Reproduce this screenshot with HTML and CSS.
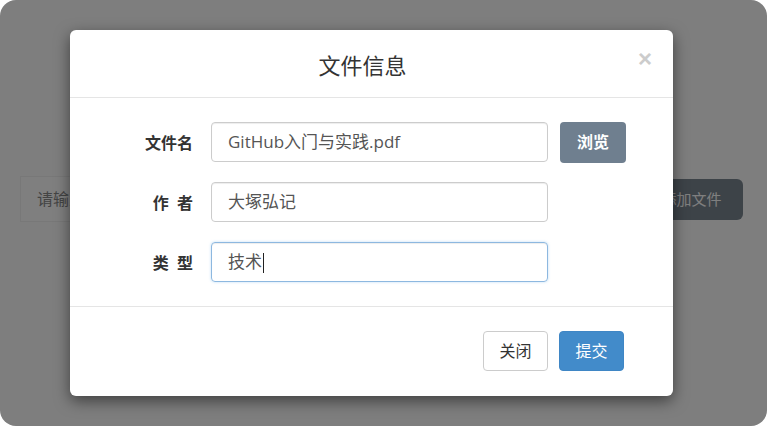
FILE: index.html
```html
<!DOCTYPE html>
<html lang="zh-CN">
<head>
<meta charset="utf-8">
<title>文件信息</title>
<link rel="stylesheet" href="styles.css">
</head>
<body>
<div class="frame">
  <div class="page">
    <div class="search">请输入文件名</div>
    <div class="add-btn">添加文件</div>
  </div>
  <div class="overlay">
    <div class="modal">
      <div class="modal-header">
        <h4 class="modal-title">文件信息</h4>
        <span class="close">×</span>
      </div>
      <div class="modal-body">
        <div class="row">
          <label class="label">文件名</label>
          <div class="control">GitHub入门与实践.pdf</div>
          <div class="btn btn-browse">浏览</div>
        </div>
        <div class="row">
          <label class="label">作 者</label>
          <div class="control">大塚弘记</div>
        </div>
        <div class="row">
          <label class="label">类 型</label>
          <div class="control focus">技术<span class="caret"></span></div>
        </div>
      </div>
      <div class="modal-footer">
        <div class="btn btn-default">关闭</div>
        <div class="btn btn-primary">提交</div>
      </div>
    </div>
  </div>
</div>
</body>
</html>
```
FILE: styles.css
```css
* { box-sizing: border-box; }
html, body { margin: 0; padding: 0; background: #fff; }
body {
  font-family: "Open Sans", "Noto Sans CJK SC", sans-serif;
  color: #333;
}
.frame {
  position: relative;
  width: 767px;
  height: 426px;
  border-radius: 16px;
  overflow: hidden;
  background: #fcfcfc;
}
.page {
  display: flex;
  align-items: center;
  padding: 176px 24px 0 20px;
  gap: 12px;
}
.search {
  flex: 1;
  height: 46px;
  background: #fff;
  border: 1px solid #f0f0f0;
  padding: 0 16px;
  line-height: 44px;
  font-size: 16px;
  color: #888;
}
.add-btn {
  height: 41px;
  width: 103px;
  border-radius: 6px;
  background: #7a8691;
  color: #fff;
  font-size: 15px;
  line-height: 41px;
  text-align: center;
}
.overlay {
  position: absolute;
  inset: 0;
  background: rgba(0, 0, 0, 0.5);
  padding: 30px 0 0 70px;
}
.modal {
  width: 603px;
  height: 366px;
  background: #fff;
  border-radius: 6px;
  box-shadow: 0 5px 15px rgba(0, 0, 0, 0.5);
  display: flex;
  flex-direction: column;
}
.modal-header {
  position: relative;
  height: 68px;
  border-bottom: 1px solid #e5e5e5;
  display: flex;
  align-items: center;
  justify-content: center;
  padding-right: 18px;
}
.modal-title {
  margin: 0;
  font-size: 22px;
  font-weight: normal;
  color: #333;
}
.close {
  position: absolute;
  right: 21px;
  top: 15px;
  font-size: 24px;
  font-weight: bold;
  color: #ccc;
  font-family: "Liberation Sans", sans-serif;
}
.modal-body {
  padding: 24px 0 24px;
  display: flex;
  flex-direction: column;
  gap: 20px;
  border-bottom: 1px solid #e5e5e5;
}
.row {
  display: flex;
  align-items: center;
  height: 40px;
}
.label {
  width: 123px;
  text-align: right;
  font-weight: bold;
  font-size: 16px;
  margin-right: 18px;
  color: #333;
  white-space: pre;
  word-spacing: 4px;
}
.control {
  width: 337px;
  height: 40px;
  border: 1px solid #ccc;
  border-radius: 4px;
  padding: 0 16px;
  line-height: 38px;
  font-size: 17px;
  color: #555;
  box-shadow: inset 0 1px 1px rgba(0, 0, 0, 0.075);
}
.control.focus {
  border-color: #8db8e0;
  box-shadow: inset 0 1px 1px rgba(0,0,0,.075), 0 0 3px rgba(102,175,233,.4);
}
.caret {
  display: inline-block;
  width: 1px;
  height: 20px;
  background: #222;
  vertical-align: middle;
  margin-left: 1px;
}
.btn {
  height: 40px;
  width: 66px;
  border-radius: 4px;
  font-size: 16px;
  line-height: 38px;
  text-align: center;
  border: 1px solid transparent;
}
.btn-browse {
  margin-left: 12px;
  background: #6f7f8f;
  color: #fff;
  font-weight: bold;
  height: 41px;
}
.modal-footer {
  display: flex;
  justify-content: flex-end;
  gap: 11px;
  padding: 24px 49px 0 0;
}
.btn-default {
  width: 65px;
  background: #fff;
  border-color: #ccc;
  color: #333;
}
.btn-primary {
  width: 65px;
  background: #428bca;
  border-color: #3f86c5;
  color: #fff;
}
```
